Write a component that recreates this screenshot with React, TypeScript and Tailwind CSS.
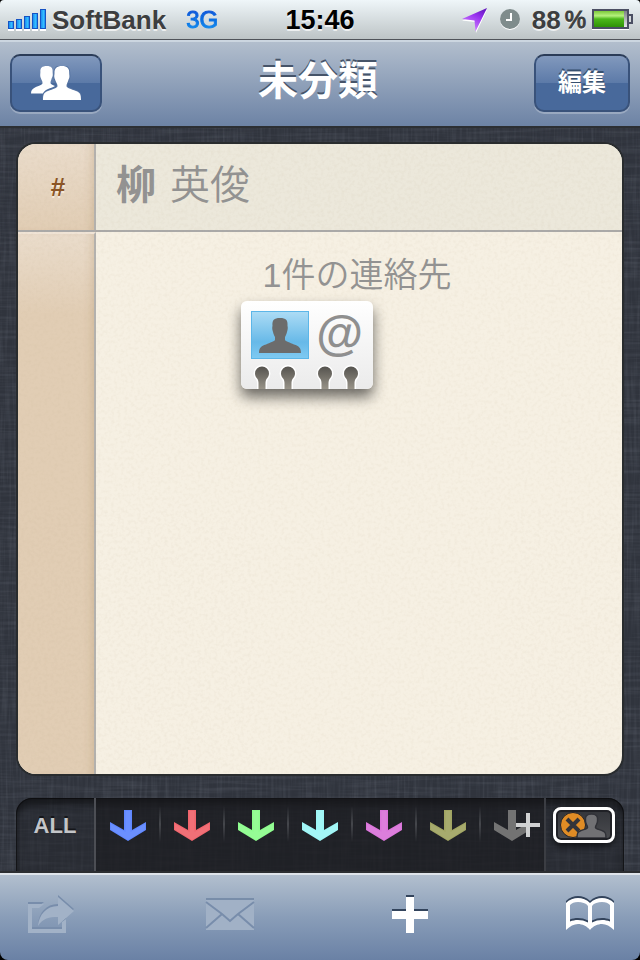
import React from 'react'

const FABRIC = 'fabric'
const PAPER = 'paper'

const NOISE_CLASS = 'pointer-events-none absolute inset-0 h-full w-full'

const tags = [
  { name: 'Blue', color: '#5f87ff' },
  { name: 'Red', color: '#f0646c' },
  { name: 'Green', color: '#8dfc8d' },
  { name: 'Cyan', color: '#9df6f6' },
  { name: 'Violet', color: '#da74da' },
  { name: 'Olive', color: '#a0a462' },
]

const TextureFilters = () => (
  <svg className="absolute h-0 w-0" aria-hidden="true">
    <filter id={`${FABRIC}-x`} x="0" y="0" width="100%" height="100%">
      <feTurbulence type="fractalNoise" baseFrequency="0.02 0.35" numOctaves="2" seed="3" />
      <feColorMatrix values="0 0 0 0 0.5  0 0 0 0 0.55  0 0 0 0 0.65  1 0 0 0 -0.4" />
    </filter>
    <filter id={`${FABRIC}-y`} x="0" y="0" width="100%" height="100%">
      <feTurbulence type="fractalNoise" baseFrequency="0.35 0.02" numOctaves="2" seed="8" />
      <feColorMatrix values="0 0 0 0 0.5  0 0 0 0 0.55  0 0 0 0 0.65  1 0 0 0 -0.4" />
    </filter>
    <filter id={PAPER} x="0" y="0" width="100%" height="100%">
      <feTurbulence type="fractalNoise" baseFrequency="0.3" numOctaves="2" seed="5" />
      <feColorMatrix values="0 0 0 0 0.5  0 0 0 0 0.4  0 0 0 0 0.25  0.8 0 0 0 -0.34" />
    </filter>
  </svg>
)

const Fabric = () => (
  <svg className={NOISE_CLASS} aria-hidden="true">
    <rect width="100%" height="100%" filter={`url(#${FABRIC}-x)`} opacity="0.2" />
    <rect width="100%" height="100%" filter={`url(#${FABRIC}-y)`} opacity="0.2" />
  </svg>
)

const Paper = () => (
  <svg className={NOISE_CLASS} aria-hidden="true">
    <rect width="100%" height="100%" filter={`url(#${PAPER})`} opacity="0.25" />
  </svg>
)

const SignalIcon = () => (
  <svg width="39" height="22" viewBox="0 0 39 22" aria-hidden="true">
    <defs>
      <linearGradient id="signal" x1="0" y1="0" x2="1" y2="0">
        <stop offset="0" stopColor="#1683ee" />
        <stop offset="0.6" stopColor="#35bdff" />
        <stop offset="1" stopColor="#1683ee" />
      </linearGradient>
    </defs>
    <path d="M0 20h6v2H0zM8 20h6v2H8zM16 20h6v2h-6zM24 20h6v2h-6zM32 20h6v2h-6z" fill="#fff" />
    <g fill="url(#signal)" stroke="#1553c4">
      <rect x="0.5" y="12.5" width="5" height="7" />
      <rect x="8.5" y="10.5" width="5" height="9" />
      <rect x="16.5" y="7.5" width="5" height="12" />
      <rect x="24.5" y="4.5" width="5" height="15" />
      <rect x="32.5" y="0.5" width="5" height="19" />
    </g>
  </svg>
)

const LocationIcon = () => (
  <svg width="26" height="26" viewBox="0 0 26 26" aria-hidden="true">
    <defs>
      <linearGradient id="location" x1="1" y1="0" x2="0.4" y2="1">
        <stop offset="0" stopColor="#5a10b8" />
        <stop offset="0.45" stopColor="#9a35f0" />
        <stop offset="1" stopColor="#d489ff" />
      </linearGradient>
    </defs>
    <path d="M25 3L0 13.5l13 1.5 1 11z" fill="#fff" />
    <path d="M25 1L0 12l12.5 1.5 1 11z" fill="url(#location)" />
  </svg>
)

const ClockIcon = () => (
  <svg width="20" height="21" viewBox="0 0 20 21" aria-hidden="true">
    <circle cx="10" cy="11" r="10" fill="#fff" />
    <circle cx="10" cy="10" r="10" fill="#7f8c8c" />
    <path d="M11 4v7H6" fill="none" stroke="#fff" strokeWidth="2" />
  </svg>
)

const BatteryIcon = () => (
  <svg width="42" height="21" viewBox="0 0 42 21" aria-hidden="true">
    <defs>
      <linearGradient id="battery" x1="0" y1="0" x2="0" y2="1">
        <stop offset="0" stopColor="#7cc93a" />
        <stop offset="0.3" stopColor="#b5f17d" />
        <stop offset="0.5" stopColor="#4cb81a" />
        <stop offset="1" stopColor="#2f9206" />
      </linearGradient>
      <linearGradient id="battery-empty" x1="0" y1="0" x2="0" y2="1">
        <stop offset="0" stopColor="#777b80" />
        <stop offset="1" stopColor="#eceeee" />
      </linearGradient>
    </defs>
    <path d="M0 19h37v2H0z" fill="#fff" />
    <rect x="1" y="1" width="35" height="18" fill="url(#battery-empty)" stroke="#4b4f63" strokeWidth="2" />
    <rect x="2" y="2" width="30" height="16" fill="url(#battery)" />
    <path d="M37 6h3v8h-3" fill="#d4d8da" stroke="#4b4f63" strokeWidth="2" />
  </svg>
)

const PERSON =
  'M21 0c6 0 8 2 7.500 8 .5 1 .3 4-.5 6-.5 1.500-.7 3-2 5v3c.5 1.500 5 2.500 9 4.500 5 1.500 7 3.500 7 8.500H0c0-5 2-7 7-8.500 4-2 8.500-3 9-4.500v-3c-1.300-2-1.500-3.500-2-5-.8-2-1-5-.5-6C13 2 15 0 21 0z'

const GroupIcon = () => (
  <svg width="50" height="34" viewBox="0 0 50 34" fill="#fff" aria-hidden="true">
    <path d="M16 0c4 0 6 2 5.600 6l.2 3c-.2 2-1 2.500-1.300 4-.4 1.500-1 2-1 4 0 1 2 2 4.500 3-2 1.500-5 2-8 3.500-2 1-3 2-4 4H0c0-3 1-4.500 4-6 4-2 7.500-2.500 7.500-4.500 0-2-.8-2.500-1.300-4-.5-1.500-1-2-1-4l.2-3C9 2 11 0 16 0z" />
    <path
      d="M31 0c5 0 7.500 2.500 7.200 7 0 2 .4 2.200.2 4-.2 2-1 2.200-1.300 4-.4 1.500-1.600 2.500-1.600 5 0 2 4.500 3 9.500 5 4 1.500 5 3 5 9H12c0-6 1-7.500 5-9 5-2 9.500-3 9.500-5 0-2.500-1.500-3.500-1.900-5-.4-1.800-1.100-2-1.300-4-.2-1.800.2-2 .2-4C23.200 2.500 26 0 31 0z"
      stroke="#5573a1"
      strokeWidth="2"
      paintOrder="stroke"
    />
  </svg>
)

const ArrowIcon = ({ color }: { color: string }) => (
  <svg width="36" height="32" viewBox="0 0 36 32" aria-hidden="true">
    <path d="M14 0h8v20l14-8v8L18 31 0 20v-8l14 8z" fill={color} />
    <path d="M15.500 1h5v21L35 14v5.500L18 30 1 19.500V14l14.500 8z" fill="#fff" opacity="0.08" />
  </svg>
)

const NewTagIcon = () => (
  <svg width="46" height="32" viewBox="0 0 46 32" aria-hidden="true">
    <path d="M14 0h8v20l14-8v8L18 31 0 20v-8l14 8z" fill="#737373" />
    <path d="M32 3h4v10h10v4H36v10h-4V17H22v-4h10z" fill="#d0d1d2" />
  </svg>
)

const ContactCardIcon = () => (
  <svg width="58" height="48" viewBox="0 0 58 48" aria-hidden="true">
    <defs>
      <linearGradient id="photo" x1="0" y1="0" x2="0" y2="1">
        <stop offset="0" stopColor="#addcf5" />
        <stop offset="0.65" stopColor="#67b9e8" />
        <stop offset="1" stopColor="#7fcaf2" />
      </linearGradient>
    </defs>
    <rect x="0.5" y="0.5" width="57" height="47" fill="url(#photo)" stroke="#5cb6e8" />
    <path d={PERSON} fill="#6c6c6c" transform="translate(8 7)" />
  </svg>
)

const CardHoles = () => (
  <svg width="132" height="34" viewBox="0 0 132 34" aria-hidden="true">
    <defs>
      <linearGradient id="hole" x1="0" y1="0" x2="0" y2="1">
        <stop offset="0" stopColor="#55534e" />
        <stop offset="1" stopColor="#989388" />
      </linearGradient>
    </defs>
    {[21, 47, 84, 110].map((x) => (
      <path
        key={x}
        d="M-3.500 24v-6c0-1-.2-2.500-1-4C-6 12.500-7 10.500-7 8.500a7 7 0 0 1 14 0C7 10.500 6 12.500 4.500 14c-.8 1.500-1 3-1 4v6z"
        transform={`translate(${x} 10)`}
        fill="url(#hole)"
        stroke="#fff"
        strokeWidth="3"
        paintOrder="stroke"
      />
    ))}
  </svg>
)

const UntaggedIcon = () => (
  <svg width="48" height="26" viewBox="0 0 48 26" aria-hidden="true">
    <circle cx="13" cy="13" r="12.500" fill="#e08c25" stroke="#222329" />
    <path d="M7 7l12 12M19 7L7 19" stroke="#34353a" strokeWidth="4" />
    <path
      d="M31.500 2c5 0 6.500 2.500 6 6 .3 2-.3 3-1 4.500-.5 1-1 1.500-1 3 0 1.500 4.500 2 7.500 3.500 2.500 1 3 2.500 3 7H17c0-4.500.5-6 3-7 3-1.500 7.500-2 7.500-3.500s-.5-2-1-3c-.7-1.500-1.300-2.500-1-4.500-.5-3.500 1-6 6-6z"
      fill="#717174"
      stroke="#303137"
      strokeWidth="1.500"
    />
  </svg>
)

const SHARE = 'M2 9h16l-5 4H6v21h30v-7l4-3v14H2zM32 2l16 14-16 14v-8c-9 0-15 1-20 9 1-11 8-20 20-20z'

const ShareIcon = () => (
  <svg width="48" height="40" viewBox="0 0 48 40" aria-hidden="true">
    <path d={SHARE} fill="#788dab" transform="translate(0 -1)" />
    <path d={SHARE} fill="#a2b2c7" transform="translate(0 1)" />
  </svg>
)

const MailIcon = () => (
  <svg width="50" height="34" viewBox="0 0 50 34" aria-hidden="true">
    <path d="M1 1h48v3H1z" fill="#788da9" />
    <path d="M1 3h48v30H1z" fill="#a1b1c6" />
    <path d="M1 5l16 12 8 7 8-7L49 5M17 17L1 31M33 17l16 14" fill="none" stroke="#788dab" strokeWidth="2" />
  </svg>
)

const PlusIcon = () => (
  <svg width="36" height="38" viewBox="0 0 36 38" aria-hidden="true">
    <path d="M14 0h8v14h14v8H22v14h-8V22H0v-8h14z" fill="#33445c" />
    <path d="M14 2h8v14h14v8H22v14h-8V24H0v-8h14z" fill="#fff" />
  </svg>
)

const BOOK =
  'M0 5C3 1.500 8 0 12 0s9 1.500 12 5c3-3.500 8-5 12-5s9 1.500 12 5v27c-4-4-8-6-12-6s-9 2-12 6c-3-4-8-6-12-6s-8 2-12 6zM4 7v16.500c2.500-1 5-1.500 8-1.500s7 .8 10 2.500V8c-2-3-6-4-10-4S6 5 4 7zM44 7v16.500c-2.500-1-5-1.500-8-1.500s-7 .8-10 2.500V8c2-3 6-4 10-4s6 1 8 3z'

const BookIcon = () => (
  <svg width="48" height="36" viewBox="0 0 48 36" fillRule="evenodd" aria-hidden="true">
    <path d={BOOK} fill="#33445c" />
    <path d={BOOK} fill="#fff" transform="translate(0 2)" />
  </svg>
)

const StatusBar = () => (
  <header className="grid h-10 grid-cols-[1fr_auto_1fr] items-center border-b border-[#50545a] bg-linear-to-b from-[#eff6f9] to-[#bdc4c6] px-2 [text-shadow:0_2px_0_#ffffffb0]">
    <div className="flex items-center">
      <SignalIcon />
      <span className="ml-[5px] text-[26px] leading-8 font-bold text-[#3d3e40]">SoftBank</span>
      <span className="ml-5 bg-linear-to-b from-[#143fd0] to-[#1b9cf5] bg-clip-text text-2xl leading-8 text-transparent [-webkit-text-stroke:1px_transparent] [text-shadow:none]">
        3G
      </span>
    </div>
    <time className="text-[27px] leading-8 font-bold text-black">15:46</time>
    <div className="flex items-center justify-end">
      <LocationIcon />
      <span className="ml-3">
        <ClockIcon />
      </span>
      <span className="ml-3 text-[26px] leading-8 font-bold text-[#3d3e40]">88</span>
      <span className="ml-1 text-2xl leading-8 text-[#3d3e40] [-webkit-text-stroke:1px_#3d3e40]">%</span>
      <span className="-mr-0.5 ml-1.5">
        <BatteryIcon />
      </span>
    </div>
  </header>
)

const NAV_BUTTON =
  'flex h-[58px] items-center justify-center rounded-[10px] border-2 border-[#39527a] border-t-[#2b3c58] bg-linear-to-b from-[#8299bd] from-0% via-[#5c7aa8] via-50% to-[#48699b] to-50% shadow-[0_2px_0_#ffffff40]'

const NavBar = () => (
  <nav className="grid h-[86px] grid-cols-[1fr_auto_1fr] items-center border-t-2 border-[#ccd6e0] bg-linear-to-b from-[#b2becd] to-[#6d83a5] px-[10px] pb-[2px]">
    <button type="button" aria-label="グループ" className={`${NAV_BUTTON} w-[92px]`}>
      <GroupIcon />
    </button>
    <h1 className="mr-1 mb-1 text-[40px] leading-[48px] font-bold text-white [text-shadow:0_-2px_0_#465469]">未分類</h1>
    <button
      type="button"
      className={`${NAV_BUTTON} w-24 justify-self-end text-2xl leading-8 font-bold text-white [text-shadow:0_-2px_0_#37506f]`}
    >
      編集
    </button>
  </nav>
)

const ContactBadge = () => (
  <div className="relative z-10 ml-[145px] h-[88px] w-[132px] rounded-md bg-linear-to-b from-white to-[#ebebeb] shadow-[0_8px_14px_#00000090]">
    <div className="flex h-[58px] items-end justify-between px-[10px]">
      <ContactCardIcon />
      <span className="text-[48px] leading-[50px] font-bold text-[#8f8f8f]">@</span>
    </div>
    <div className="absolute bottom-0 left-0">
      <CardHoles />
    </div>
  </div>
)

const ContactList = () => (
  <section className="relative mx-[18px] mt-4 mb-6 flex flex-1 flex-col overflow-hidden rounded-[18px] bg-[#f6f0e3] shadow-[0_0_0_2px_#292c2e]">
    <div className="flex h-[88px] border-b-2 border-[#aaa9a8]">
      <div className="flex w-[78px] items-center justify-center border-r-2 border-[#b3b1ae] bg-linear-to-b from-[#eadccb] to-[#e1cdb4] pl-1 text-[26px] leading-8 font-bold text-[#8a5424] shadow-[inset_-8px_0_8px_-6px_#a9896250] [text-shadow:0_2px_0_#f5eadb]">
        #
      </div>
      <a
        href="#contact"
        className="flex flex-1 items-center gap-3.5 bg-[#ece8db] pb-1 pl-5 text-[40px] leading-[48px] text-[#929292]"
      >
        <span className="font-bold">柳</span>
        <span className="font-[350]">英俊</span>
      </a>
    </div>
    <div className="flex flex-1">
      <div className="w-[78px] border-t-2 border-r-2 border-t-[#f0e4d6] border-r-[#b3b1ae] bg-linear-to-b from-[#eadccb] to-[#e1cdb4] to-[80px] shadow-[inset_-8px_0_8px_-6px_#a9896250]" />
      <div className="flex-1 pt-[21px]">
        <p className="mb-[3px] pr-1 text-center text-[34px] leading-[45px] font-[350] text-[#929292]">1件の連絡先</p>
        <ContactBadge />
      </div>
    </div>
    <Paper />
  </section>
)

const TagBar = () => (
  <div className="relative mx-4 flex h-[75px] overflow-hidden rounded-t-2xl bg-[#22242a80] shadow-[inset_0_6px_8px_#00000090,inset_0_0_0_1px_#1a1b1f]">
    <button type="button" className="w-20 border-r-2 border-[#4c4e54] pt-1 pb-6 text-[22px] leading-8 font-bold text-[#c3c5c8] [text-shadow:0_-2px_0_#15161a]">
      ALL
    </button>
    <ul className="flex flex-1 bg-[#18191d90]">
      {tags.map((tag) => (
        <li key={tag.name} className="flex flex-1 items-start pt-2">
          <button type="button" aria-label={tag.name} className="flex flex-1 justify-center pt-1">
            <ArrowIcon color={tag.color} />
          </button>
          <span className="-mr-px h-9 w-[2px] bg-linear-to-b from-transparent via-[#45474c] to-transparent" />
        </li>
      ))}
      <li className="flex flex-1 items-start justify-end pt-3">
        <button type="button" aria-label="タグを追加" className="pr-1">
          <NewTagIcon />
        </button>
      </li>
    </ul>
    <div className="flex w-20 items-start justify-end border-l-2 border-[#3b3d43] pt-[9px] pr-[9px]">
      <button
        type="button"
        aria-label="未分類"
        aria-pressed="true"
        className="flex h-9 w-[62px] items-center justify-center rounded-lg border-[3px] border-white bg-linear-to-b from-[#33353a] to-[#4b4c50] shadow-[inset_0_0_0_2px_#202126,0_3px_6px_#000000a0]"
      >
        <UntaggedIcon />
      </button>
    </div>
  </div>
)

const TOOL_BUTTON = 'flex w-[50px] items-center justify-center'

const Toolbar = () => (
  <footer className="relative flex h-[87px] justify-between border-t-2 border-[#dfe4ea] bg-linear-to-b from-[#b2bfce] from-0% via-[#899db8] via-50% to-[#6a81a5] px-[25px] pb-2 shadow-[0_-2px_0_#2c2e31]">
    <button type="button" aria-label="共有" disabled className={TOOL_BUTTON}>
      <ShareIcon />
    </button>
    <button type="button" aria-label="メール" disabled className={TOOL_BUTTON}>
      <MailIcon />
    </button>
    <button type="button" aria-label="追加" className={TOOL_BUTTON}>
      <PlusIcon />
    </button>
    <button type="button" aria-label="連絡先" className={TOOL_BUTTON}>
      <BookIcon />
    </button>
  </footer>
)

export default function App() {
  return (
    <div className="min-h-screen bg-black">
      <TextureFilters />
      <div
        lang="ja"
        className="flex min-h-screen flex-col overflow-hidden rounded-t-[4px] rounded-b-[8px] font-['Liberation_Sans','Noto_Sans_CJK_JP',sans-serif]"
      >
        <StatusBar />
        <NavBar />
        <main className="relative flex flex-1 flex-col border-t-2 border-[#2c2f33] bg-[#30343d]">
          <Fabric />
          <ContactList />
          <TagBar />
        </main>
        <Toolbar />
      </div>
    </div>
  )
}
